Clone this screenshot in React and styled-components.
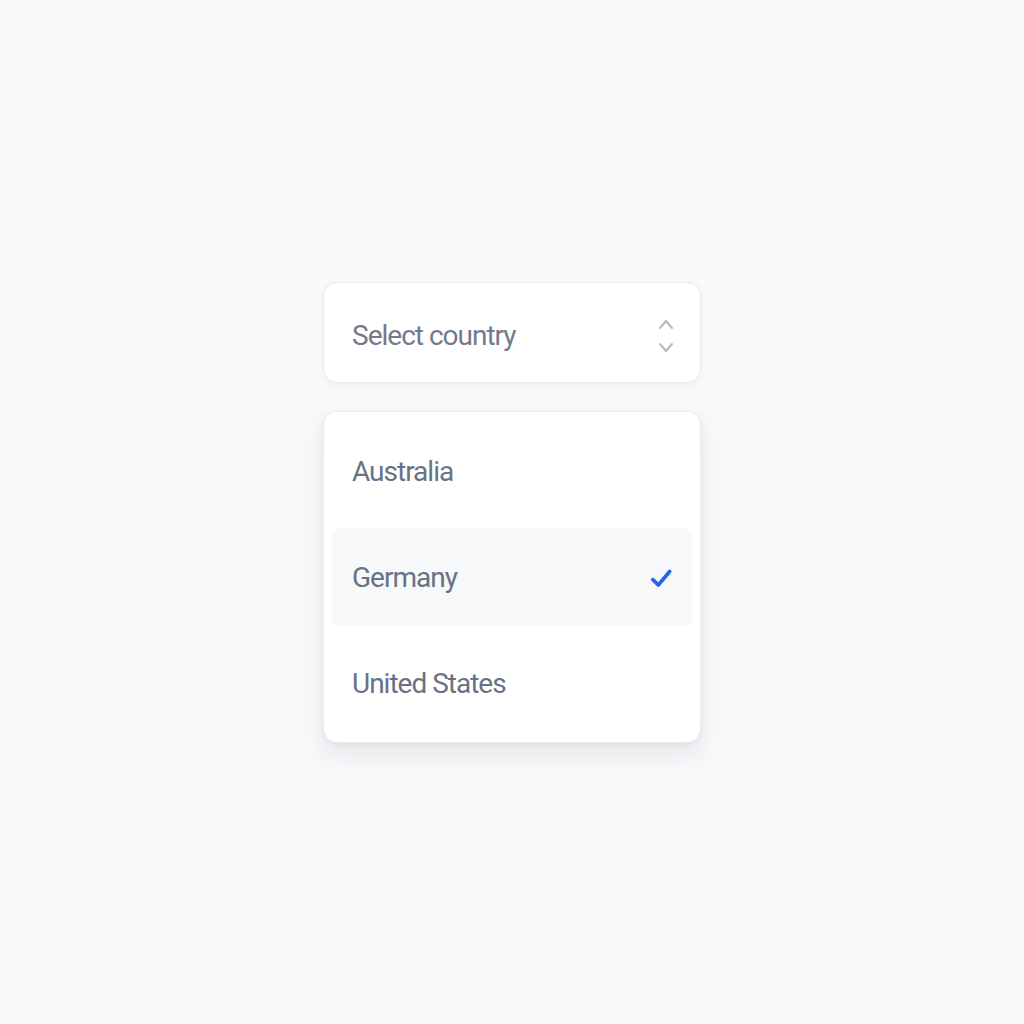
import React from 'react'
import styled, {createGlobalStyle} from "styled-components"

const GlobalStyle = createGlobalStyle`
    html, body {
        margin: 0;
        padding: 0;
        background: #f8f9fb;
        font-family: Roboto, "Liberation Sans", Arial, sans-serif;
    }
`
const Page = styled.div`
    min-height: 100vh;
    display: flex;
    align-items: center;
    justify-content: center;
`
const Column = styled.div`
    width: 378px;
    display: flex;
    flex-direction: column;
    gap: 28px;
`
const Trigger = styled.button`
    box-sizing: border-box;
    height: 101px;
    width: 100%;
    padding: 8px 24px 0 28px;
    display: flex;
    align-items: center;
    justify-content: space-between;
    background: #ffffff;
    border: 1.5px solid #e7e9ee;
    border-radius: 14px;
    box-shadow: 0 2px 6px rgba(15, 23, 42, 0.05);
    font: inherit;
    cursor: pointer;
`
const Label = styled.span`
    font-size: 28px;
    letter-spacing: -1px;
    color: ${props => props.muted ? "#727a8c" : "#697284"};
    line-height: 1;
`
const Menu = styled.ul`
    box-sizing: border-box;
    list-style: none;
    margin: 0;
    padding: 10px 8px;
    display: flex;
    flex-direction: column;
    gap: 8px;
    background: #ffffff;
    border: 1.5px solid #e9ebef;
    border-radius: 14px;
    box-shadow: 0 12px 24px rgba(15, 23, 42, 0.08), 0 2px 6px rgba(15, 23, 42, 0.04);
`
const Option = styled.li`
    box-sizing: border-box;
    height: 98px;
    padding: 3px 18px 0 20px;
    display: flex;
    align-items: center;
    justify-content: space-between;
    border-radius: 8px;
    background: ${props => props.active ? "#f7f8fa" : "transparent"};
`

const UpDown = () => (
    <svg width="20" height="44" viewBox="0 0 20 44" fill="none" stroke="#b4bac5" strokeWidth="2" strokeLinecap="round" strokeLinejoin="round">
        <path d="M4 14 10 7l6 7" />
        <path d="M4 30l6 7 6-7" />
    </svg>
)

const Check = () => (
    <svg width="26" height="26" viewBox="0 0 24 24" fill="none" stroke="#2563eb" strokeWidth="3.4" strokeLinecap="round" strokeLinejoin="round">
        <path d="M4.5 13.5 9.5 18.5 20 6" />
    </svg>
)

const countries = ["Australia", "Germany", "United States"]

const App = () => {
    const selected = "Germany"
    return (
        <Page>
            <GlobalStyle />
            <Column>
                <Trigger>
                    <Label muted>Select country</Label>
                    <UpDown />
                </Trigger>
                <Menu>
                    {countries.map(name => (
                        <Option key={name} active={name === selected}>
                            <Label>{name}</Label>
                            {name === selected && <Check />}
                        </Option>
                    ))}
                </Menu>
            </Column>
        </Page>
    )
}

export default App
